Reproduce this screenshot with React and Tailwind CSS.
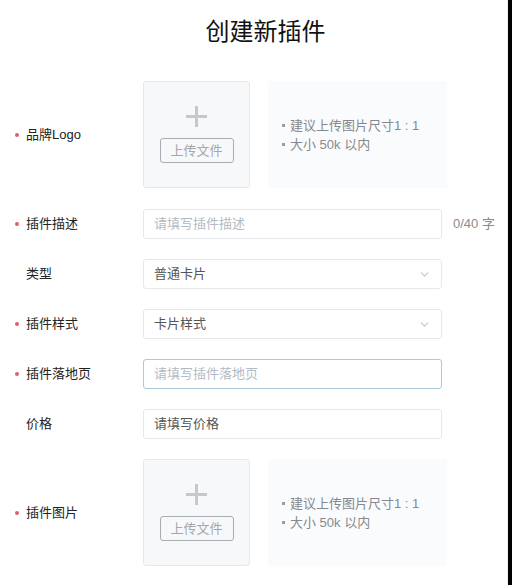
import React from 'react';
import { ChevronDown } from 'lucide-react';

const font = { fontFamily: '"Liberation Sans", "Noto Sans CJK SC", sans-serif' };

const Label = ({ text, required }) => (
    <div className="w-[128px] flex items-center text-[13px] text-[#222]">
        <span className={`w-[4px] h-[4px] rounded-full mr-[7px] ${required ? 'bg-[#d9626a]' : 'bg-transparent'}`}></span>
        {text}
    </div>
);

const Upload = () => (
    <div className="w-[107px] h-[107px] bg-[#f7f8fa] border border-[#e6e8eb] rounded-[3px] flex flex-col items-center pt-[24px]">
        <svg width="21" height="21" viewBox="0 0 21 21">
            <path d="M10.5 0v21M0 10.5h21" stroke="#c6c8cc" strokeWidth="3" />
        </svg>
        <div className="mt-[11px] w-[74px] h-[25px] border border-[#a7adb4] rounded-[3px] flex items-center justify-center text-[13px] text-[#a3a7ac]">
            上传文件
        </div>
    </div>
);

const Hint = () => (
    <div className="ml-[18px] w-[179px] h-[107px] bg-[#fafbfd] flex flex-col justify-center pl-[14px] text-[13px] text-[#85898f] leading-[19px]">
        <div className="flex items-center">
            <span className="w-[3px] h-[3px] bg-[#9a9ea4] mr-[5px]"></span>建议上传图片尺寸1 : 1
        </div>
        <div className="flex items-center">
            <span className="w-[3px] h-[3px] bg-[#9a9ea4] mr-[5px]"></span>大小 50k 以内
        </div>
    </div>
);

const Field = ({ children, focused }) => (
    <div className={`w-[299px] h-[30px] rounded-[3px] border flex items-center px-[10px] text-[13px] ${focused ? 'border-[#a9cbd9]' : 'border-[#e6e8eb]'}`}>
        {children}
    </div>
);

const App = () => {
    return (
        <div className="flex w-[512px] h-[585px] bg-white overflow-hidden" style={font}>
            <div className="w-[508px] border-r border-[#f0f0f0]">
                <h1 className="text-center text-[24px] text-[#111] pt-[14px] h-[81px] pl-[24px]">创建新插件</h1>

                <div className="flex items-center pl-[15px]">
                    <Label text="品牌Logo" required />
                    <Upload />
                    <Hint />
                </div>

                <div className="flex items-center pl-[15px] mt-[21px]">
                    <Label text="插件描述" required />
                    <Field><span className="text-[#b4bac3]">请填写插件描述</span></Field>
                    <span className="ml-[11px] text-[13px] text-[#8a8a8a]">0/40 字</span>
                </div>

                <div className="flex items-center pl-[15px] mt-[20px]">
                    <Label text="类型" />
                    <Field>
                        <span className="flex-1 text-[#555]">普通卡片</span>
                        <ChevronDown size={13} className="text-[#c3c7cc]" />
                    </Field>
                </div>

                <div className="flex items-center pl-[15px] mt-[20px]">
                    <Label text="插件样式" required />
                    <Field>
                        <span className="flex-1 text-[#555]">卡片样式</span>
                        <ChevronDown size={13} className="text-[#c3c7cc]" />
                    </Field>
                </div>

                <div className="flex items-center pl-[15px] mt-[20px]">
                    <Label text="插件落地页" required />
                    <Field focused><span className="text-[#b4bac3]">请填写插件落地页</span></Field>
                </div>

                <div className="flex items-center pl-[15px] mt-[20px]">
                    <Label text="价格" />
                    <Field><span className="text-[#555]">请填写价格</span></Field>
                </div>

                <div className="flex items-center pl-[15px] mt-[20px]">
                    <Label text="插件图片" required />
                    <Upload />
                    <Hint />
                </div>
            </div>
            <div className="w-[4px] bg-black"></div>
        </div>
    );
};

export default App;
